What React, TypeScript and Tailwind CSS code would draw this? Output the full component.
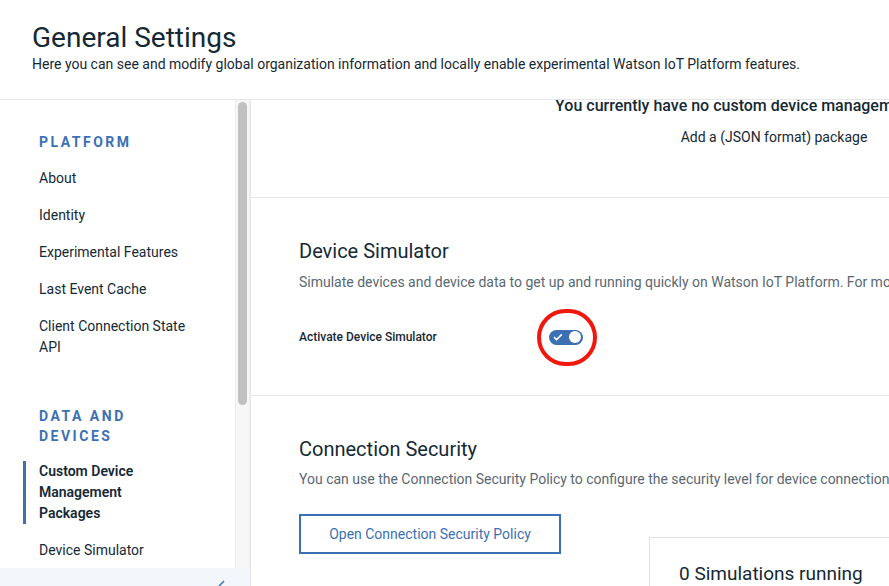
import React from 'react';

const FONT = { fontFamily: 'Roboto, "Liberation Sans", sans-serif' };

function NavItem({ label, active = false }: { label: React.ReactNode; active?: boolean }) {
  if (active) {
    return (
      <div className="mt-[15px] -ml-4 border-l-[3px] border-[#3d70b2] pl-[13px] text-sm font-semibold leading-[21px] text-[#152935]">
        {label}
      </div>
    );
  }
  return <div className="mt-4 text-sm leading-[21px] text-[#152935]">{label}</div>;
}

function Toggle() {
  return (
    <div className="relative">
      <div className="flex h-[15px] w-[34px] items-center justify-between rounded-full bg-[#3d70b2] px-[2px]">
        <svg width="10" height="8" viewBox="0 0 10 8" className="ml-[2px]">
          <path d="M1 4.2 3.6 6.6 8.8 1.4" fill="none" stroke="#fff" strokeWidth="1.6" />
        </svg>
        <div className="h-[12px] w-[12px] rounded-full bg-white" />
      </div>
      {/* annotation ring */}
      <div className="absolute left-[-12px] top-[-21px] h-[57px] w-[60px] rounded-full border-4 border-[#f0170c]" />
    </div>
  );
}

export default function App() {
  return (
    <div className="h-[586px] w-[889px] overflow-hidden bg-white" style={FONT}>
      <header className="h-[100px] border-b border-[#e5e7ea] px-8 pt-[21px]">
        <h1 className="text-[28px] font-normal leading-[33px] text-[#152935]">General Settings</h1>
        <p className="text-sm leading-5 text-[#152935]">
          Here you can see and modify global organization information and locally enable experimental Watson IoT Platform features.
        </p>
      </header>

      <div className="flex h-[486px]">
        {/* sidebar */}
        <aside className="flex w-[250px] shrink-0 flex-col">
          <div className="flex flex-1 overflow-hidden">
            <nav className="w-[235px] shrink-0 pl-[39px] pt-8">
              <div className="text-sm font-bold leading-5 tracking-[2.5px] text-[#3d70b2]">PLATFORM</div>
              <NavItem label="About" />
              <NavItem label="Identity" />
              <NavItem label="Experimental Features" />
              <NavItem label="Last Event Cache" />
              <NavItem
                label={
                  <>
                    Client Connection State
                    <br />
                    API
                  </>
                }
              />
              <div className="mt-[48px] text-sm font-bold leading-5 tracking-[2.5px] text-[#3d70b2]">
                DATA AND
                <br />
                DEVICES
              </div>
              <NavItem
                active
                label={
                  <>
                    Custom Device
                    <br />
                    Management
                    <br />
                    Packages
                  </>
                }
              />
              <NavItem label="Device Simulator" />
            </nav>
            <div className="w-[15px] shrink-0 border-x border-[#ececec] bg-[#f7f7f7] px-[2px] pt-[2px]">
              <div className="h-[303px] rounded-full bg-[#c1c1c1]" />
            </div>
          </div>
          <div className="flex h-[18px] justify-end bg-[#f3f6fa] pr-6 pt-[12px]">
            <svg width="8" height="8" viewBox="0 0 8 8">
              <path d="M1 6 6 1" fill="none" stroke="#3d70b2" strokeWidth="1.5" />
            </svg>
          </div>
        </aside>

        {/* main */}
        <main className="flex-1 overflow-hidden border-l border-[#e5e7ea]">
          <div className="w-[1046px]">
            <section className="flex h-[98px] flex-col border-b border-[#e5e7ea] text-center text-[#152935]">
              <div className="-mt-1 text-base font-medium leading-5">
                You currently have no custom device management packages.
              </div>
              <div className="mt-[11px] text-sm leading-5">Add a (JSON format) package</div>
            </section>

            <section className="h-[198px] border-b border-[#e5e7ea] px-[48px] pt-[39px]">
              <h2 className="text-[20px] font-normal leading-7 text-[#152935]">Device Simulator</h2>
              <p className="mt-[7px] text-sm leading-5 text-[#5a6872]">
                Simulate devices and device data to get up and running quickly on Watson IoT Platform. For more information, see the documentation.
              </p>
              <div className="mt-[37px] flex items-center">
                <div className="w-[250px] text-xs font-medium text-[#152935]">Activate Device Simulator</div>
                <Toggle />
              </div>
            </section>

            <section className="px-[48px] pt-[39px]">
              <h2 className="text-[20px] font-normal leading-7 text-[#152935]">Connection Security</h2>
              <p className="mt-[6px] text-sm leading-5 text-[#5a6872]">
                You can use the Connection Security Policy to configure the security level for device connections to Watson IoT Platform.
              </p>
              <div className="mt-[25px] flex items-start">
                <button className="h-[40px] w-[262px] border-2 border-[#3d70b2] text-sm text-[#3d70b2]">
                  Open Connection Security Policy
                </button>
                <div className="ml-[88px] mt-[23px] h-[80px] w-[400px] border border-[#dfe3e6] px-[29px] pt-[22px]">
                  <div className="text-[19px] leading-7 text-[#152935]">0 Simulations running</div>
                </div>
              </div>
            </section>
          </div>
        </main>
      </div>
    </div>
  );
}
